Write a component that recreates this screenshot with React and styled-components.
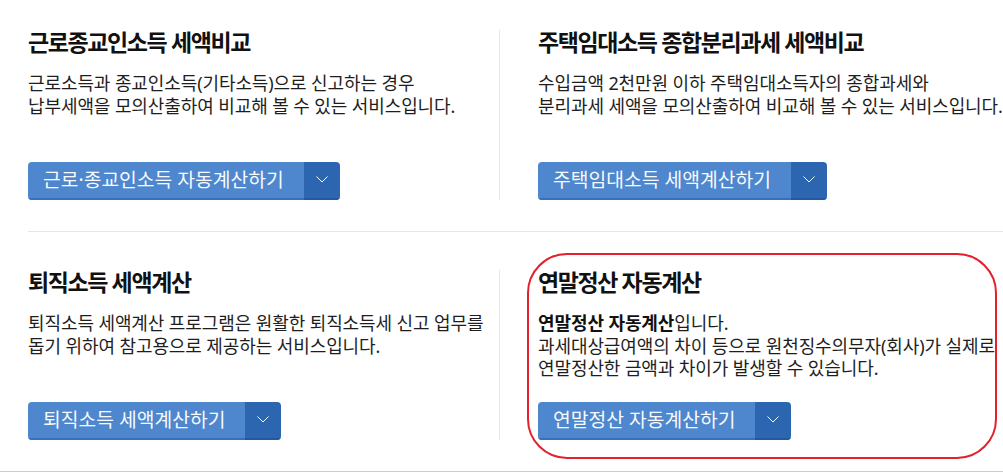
import React from "react";
import styled, { createGlobalStyle } from "styled-components";

const GlobalStyle = createGlobalStyle`
  body {
    margin: 0;
    background: #fff;
    font-family: "Noto Sans", "Noto Sans CJK KR", sans-serif;
    color: #222;
  }
`;

const items = [
  {
    title: "근로종교인소득 세액비교",
    desc: ["근로소득과 종교인소득(기타소득)으로 신고하는 경우", "납부세액을 모의산출하여 비교해 볼 수 있는 서비스입니다."],
    button: "근로·종교인소득 자동계산하기",
  },
  {
    title: "주택임대소득 종합분리과세 세액비교",
    desc: ["수입금액 2천만원 이하 주택임대소득자의 종합과세와", "분리과세 세액을 모의산출하여 비교해 볼 수 있는 서비스입니다."],
    button: "주택임대소득 세액계산하기",
  },
  {
    title: "퇴직소득 세액계산",
    desc: ["퇴직소득 세액계산 프로그램은 원활한 퇴직소득세 신고 업무를", "돕기 위하여 참고용으로 제공하는 서비스입니다."],
    button: "퇴직소득 세액계산하기",
  },
  {
    title: "연말정산 자동계산",
    lead: "연말정산 자동계산",
    desc: ["입니다.", "과세대상급여액의 차이 등으로 원천징수의무자(회사)가 실제로", "연말정산한 금액과 차이가 발생할 수 있습니다."],
    button: "연말정산 자동계산하기",
    marked: true,
  },
];

const Chevron = () => (
  <svg width="12" height="7" viewBox="0 0 12 7" fill="none">
    <path d="M0.5 0.5 L6 6 L11.5 0.5" stroke="#fff" strokeWidth="1" />
  </svg>
);

const Card = ({ item, right }) => (
  <Cell $right={right}>
    {item.marked && <Highlight />}
    <Title>{item.title}</Title>
    <Desc>
      {item.lead && <strong>{item.lead}</strong>}
      {item.desc.map((line, i) => (
        <React.Fragment key={i}>
          {line}
          {i < item.desc.length - 1 && <br />}
        </React.Fragment>
      ))}
    </Desc>
    <ButtonGroup>
      <MainButton>{item.button}</MainButton>
      <ToggleButton>
        <Chevron />
      </ToggleButton>
    </ButtonGroup>
  </Cell>
);

export default function App() {
  return (
    <>
      <GlobalStyle />
      <Page>
        <Row $top>
          <Card item={items[0]} />
          <Card item={items[1]} right />
        </Row>
        <Row>
          <Card item={items[2]} />
          <Card item={items[3]} right />
        </Row>
      </Page>
    </>
  );
}

const Page = styled.div`
  width: 1003px;
  height: 474px;
  overflow: hidden;
`;

const Row = styled.div`
  display: grid;
  grid-template-columns: 471px 504px;
  margin-left: ${(p) => (p.$top ? "28px" : "0")};
  padding: ${(p) => (p.$top ? "30px 0 31px" : "38px 0 31px 28px")};
  border-bottom: 1px solid ${(p) => (p.$top ? "#e6e6e6" : "#c9ced4")};
`;

const Cell = styled.div`
  position: relative;
  display: flex;
  flex-direction: column;
  height: 170px;
  box-sizing: border-box;
  white-space: nowrap;
  ${(p) => p.$right && "border-left: 1px solid #e6e6e6; padding-left: 38px;"}
`;

const Highlight = styled.div`
  position: absolute;
  left: 27px;
  top: -17px;
  width: 470px;
  height: 206px;
  box-sizing: border-box;
  border: 2px solid #e3202b;
  border-radius: 40px;
  pointer-events: none;
`;

const Title = styled.h3`
  margin: -2px 0 0;
  font-size: 23px;
  line-height: 28px;
  font-weight: 700;
  letter-spacing: -1.4px;
  color: #111;
`;

const Desc = styled.p`
  margin: 16px 0 0;
  font-size: 18px;
  line-height: 22.5px;
  letter-spacing: -0.1px;
  color: #1e1e1e;
  strong {
    font-weight: 700;
    color: #111;
  }
`;

const ButtonGroup = styled.div`
  display: flex;
  align-self: flex-start;
  margin-top: auto;
  height: 38px;
  border-radius: 4px;
  overflow: hidden;
`;

const MainButton = styled.button`
  display: flex;
  align-items: center;
  padding: 0 20px 2px 15px;
  border: 0;
  border-bottom: 2px solid #3a70b8;
  background: #4e87cd;
  color: #f7f9fc;
  font-family: inherit;
  font-size: 19.3px;
  cursor: pointer;
`;

const ToggleButton = styled.button`
  display: flex;
  align-items: center;
  justify-content: center;
  width: 36px;
  padding: 0 0 2px;
  border: 0;
  border-bottom: 2px solid #2459a0;
  background: #2d66b0;
  cursor: pointer;
`;
